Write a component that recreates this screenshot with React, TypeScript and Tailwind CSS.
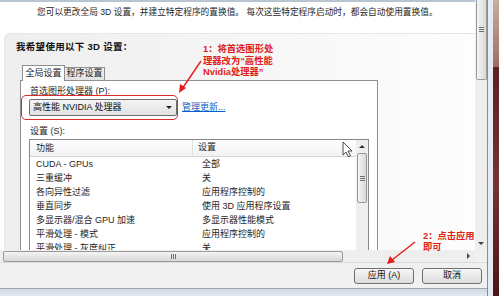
import React from 'react';

const font = "font-['Liberation_Sans','Noto_Sans_CJK_SC',sans-serif]";

const rows: [string, string][] = [
  ['CUDA - GPUs', '全部'],
  ['三重缓冲', '关'],
  ['各向异性过滤', '应用程序控制的'],
  ['垂直同步', '使用 3D 应用程序设置'],
  ['多显示器/混合 GPU 加速', '多显示器性能模式'],
  ['平滑处理 - 模式', '应用程序控制的'],
  ['平滑处理 - 灰度纠正', '关'],
];

function Grip({ vertical }: { vertical?: boolean }) {
  if (vertical) {
    return (
      <div className="flex flex-col gap-[1px]">
        <div className="h-px w-[5px] bg-[#6f6f6f]" />
        <div className="h-px w-[5px] bg-[#6f6f6f]" />
        <div className="h-px w-[5px] bg-[#6f6f6f]" />
      </div>
    );
  }
  return (
    <div className="flex gap-[1px]">
      <div className="h-[5px] w-px bg-[#6f6f6f]" />
      <div className="h-[5px] w-px bg-[#6f6f6f]" />
      <div className="h-[5px] w-px bg-[#6f6f6f]" />
    </div>
  );
}

function ListBox() {
  return (
    <div className="mt-[2px] flex h-[130px] w-[340px] border border-[#828790] bg-white">
      <div className="flex-1">
        <div className="flex h-[17px] items-center border-b border-[#d5d5d5] bg-gradient-to-b from-white to-[#f1f2f4] text-[9px] text-[#1e1e1e]">
          <div className="w-[163px] border-r border-[#e0e0e0] pl-[6px] leading-[16px]">功能</div>
          <div className="pl-[5px]">设置</div>
        </div>
        <div className="pt-[1px]">
          {rows.map(([a, b]) => (
            <div key={a} className="flex h-[14px] items-center text-[9px] text-[#1e1e1e]">
              <div className="w-[163px] pl-[6px]">{a}</div>
              <div className="pl-[9px]">{b}</div>
            </div>
          ))}
        </div>
      </div>
      <div className="flex w-[12px] flex-col items-center bg-[#eeeeee]">
        <div className="flex h-[13px] items-center justify-center">
          <div className="h-0 w-0 border-x-[3px] border-b-[3px] border-x-transparent border-b-[#333]" />
        </div>
        <div className="flex h-[50px] w-[10px] items-center justify-center rounded-[2px] border border-[#979797] bg-gradient-to-r from-[#f4f4f4] to-[#d9d9d9]">
          <Grip vertical />
        </div>
      </div>
    </div>
  );
}

function TabPanel() {
  return (
    <div className="h-[200px] w-[358px] border border-[#8e8f8f] bg-white pl-[8px] pt-[4px]">
      <div className="pl-px text-[9px] leading-[12px] text-[#1e1e1e]">首选图形处理器 (P):</div>
      <div className="mt-[2px] flex items-center gap-[5px]">
        <div className="relative">
          <div className="flex h-[17px] w-[148px] items-center justify-between rounded-[2px] border border-[#707070] bg-gradient-to-b from-[#f4f4f4] to-[#e2e2e2] pl-[3px] pr-[4px] text-[9px] text-[#111]">
            <span>高性能 NVIDIA 处理器</span>
            <div className="h-0 w-0 border-x-[3px] border-t-[3px] border-x-transparent border-t-[#222]" />
          </div>
          <div className="absolute -bottom-[4px] -left-[8px] -right-[1px] -top-[4px] rounded-[5px] border-[1.5px] border-[#e02a2a]" />
        </div>
        <span className="text-[9px] text-[#0a5fc8] underline">管理更新...</span>
      </div>
      <div className="mt-[9px] pl-px text-[9px] leading-[12px] text-[#1e1e1e]">设置 (S):</div>
      <ListBox />
    </div>
  );
}

export default function App() {
  return (
    <div className={`relative flex h-[296px] w-[500px] overflow-hidden bg-white ${font}`}>
      <div className="flex w-[488px] flex-col border-r border-[#8c8c8c]">
        <div className="flex h-[250px]">
          <div className="w-[475px] overflow-hidden border-t-2 border-[#b8c4d0] bg-white">
            <p className="pl-[37px] pt-[4px] text-[8.7px] leading-[12px] text-[#1e1e1e]">
              您可以更改全局 3D 设置，并建立特定程序的置换值。 每次这些特定程序启动时，都会自动使用置换值。
            </p>
            <div className="ml-[4px] mt-[15px] h-[240px] rounded-tl-[6px] border-l border-t border-[#e6e6e6] bg-gradient-to-r from-[#eeeeee] via-[#f6f6f6] to-[#fdfdfd] pl-[11px] pt-[7px]">
              <h2 className="text-[9.5px] font-bold leading-[12px] tracking-[0.3px] text-[#111]">我希望使用以下 3D 设置：</h2>
              <div className="ml-[4px] mt-[12px]">
                <div className="flex items-end pl-[2px]">
                  <div className="relative z-10 -mb-px flex h-[16px] w-[43px] items-center justify-center border border-b-0 border-[#8e8f8f] bg-white text-[9px] text-[#1e1e1e]">
                    全局设置
                  </div>
                  <div className="flex h-[13px] w-[40px] items-center justify-center border border-b-0 border-l-0 border-[#8e8f8f] bg-gradient-to-b from-[#f2f2f2] to-[#e3e3e3] text-[9px] text-[#1e1e1e]">
                    程序设置
                  </div>
                </div>
                <TabPanel />
              </div>
            </div>
          </div>
          <div className="flex w-[12px] flex-col items-center justify-between bg-[#eeeeee]">
            <div className="flex h-[80px] w-[11px] items-start justify-center rounded-b-[2px] border border-t-0 border-[#9b9b9b] bg-gradient-to-r from-[#f4f4f4] to-[#d8d8d8] pt-[27px]">
              <Grip vertical />
            </div>
            <div className="mb-[5px] h-0 w-0 border-x-[3px] border-t-[3px] border-x-transparent border-t-[#444]" />
          </div>
        </div>
        <div className="flex h-[12px]">
          <div className="flex w-[475px] items-center bg-[#eeeeee] pl-[3px]">
            <div className="flex h-[11px] w-[340px] items-center justify-center rounded-[2px] border border-[#9b9b9b] bg-gradient-to-b from-[#f4f4f4] to-[#d8d8d8]">
              <Grip />
            </div>
            <div className="flex-1" />
            <div className="mr-[5px] h-0 w-0 border-y-[3px] border-l-[3px] border-y-transparent border-l-[#444]" />
          </div>
          <div className="w-[12px] bg-[#f0f0f0]" />
        </div>
        <div className="flex h-[26px] items-center justify-end gap-[8px] border-t border-[#dcdcdc] bg-[#f0f0f0] pr-[5px]">
          <button className="flex h-[16px] w-[60px] items-center justify-center rounded-[3px] border border-[#707070] bg-gradient-to-b from-[#f6f6f6] to-[#dcdcdc] text-[9px] text-[#111]">
            应用 (A)
          </button>
          <button className="flex h-[16px] w-[60px] items-center justify-center rounded-[3px] border border-[#707070] bg-gradient-to-b from-[#f6f6f6] to-[#dcdcdc] text-[9px] text-[#111]">
            取消
          </button>
        </div>
        <div className="flex-1 border-t border-[#a5a5a5] bg-gradient-to-b from-[#cfd9e4] to-[#e3eaf1]" />
      </div>
      <div className="w-[5px] bg-[#e4ebf2]" />
      <div className="flex w-[6px] flex-col">
        <div className="h-[67px] bg-gradient-to-b from-[#c9ad9c] to-[#9c6e62]" />
        <div className="flex-1 bg-gradient-to-b from-[#5e1e22] via-[#7a3134] to-[#4a1519]" />
      </div>

      <div className="absolute left-[203px] top-[44px] text-[9.3px] font-bold leading-[11.5px] text-[#e01c1c]">
        <div>1：将首选图形处</div>
        <div>理器改为“高性能</div>
        <div>Nvidia处理器”</div>
      </div>
      <div className="absolute left-[423px] top-[231px] text-[9.3px] font-bold leading-[11px] text-[#e01c1c]">
        <div>2：点击应用</div>
        <div>即可</div>
      </div>

      <svg className="pointer-events-none absolute left-0 top-0" width="500" height="296">
        <line x1="201" y1="61" x2="182" y2="89" stroke="#e01c1c" strokeWidth="1.4" />
        <polygon points="179,93 180,84 186,88" fill="#e01c1c" />
        <line x1="415" y1="242" x2="392" y2="260" stroke="#e01c1c" strokeWidth="1.4" />
        <polygon points="387,264 390,256 395,262" fill="#e01c1c" />
        <path
          d="M343 142 L343 155 L346 152 L348.5 157 L350.5 156 L348 151 L352 151 Z"
          fill="#ffffff"
          stroke="#222"
          strokeWidth="0.8"
          strokeLinejoin="round"
        />
      </svg>
    </div>
  );
}
